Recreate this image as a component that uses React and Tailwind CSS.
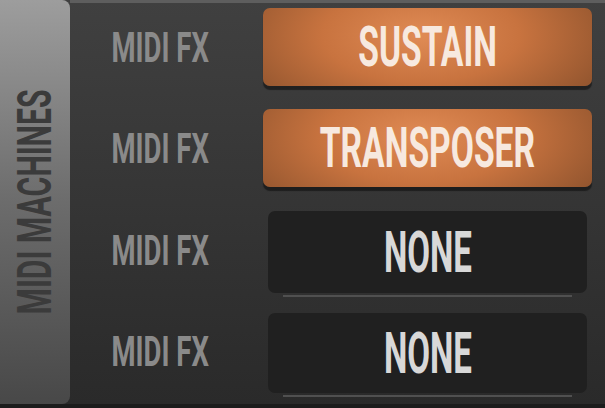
import React from "react";

const font = { fontFamily: "Roboto, 'DejaVu Sans', sans-serif" };

function Label() {
  return (
    <div className="w-[193px] pr-[13px] flex items-center justify-center h-full">
      <span
        className="inline-block text-[43px] leading-none font-bold text-[#8a8a8a] scale-x-[0.64] whitespace-nowrap"
        style={font}
      >
        MIDI FX
      </span>
    </div>
  );
}

function OrangeButton({ text }) {
  return (
    <div className="w-[329px] h-[78px] rounded-[7px] flex items-center justify-center bg-[radial-gradient(ellipse_60%_120%_at_48%_35%,#e08b55_0%,#c8733f_50%,#94562f_100%)] shadow-[0_4px_1px_rgba(0,0,0,0.45)]">
      <span
        className="inline-block text-[56px] leading-none font-bold text-[#f7e9df] scale-x-[0.6] whitespace-nowrap"
        style={font}
      >
        {text}
      </span>
    </div>
  );
}

function DarkButton({ h }) {
  return (
    <div className="flex flex-col ml-[5px] w-[319px]">
      <div
        className={`${h} rounded-[7px] flex items-center justify-center bg-[#202020]`}
      >
        <span
          className="inline-block text-[57px] leading-none font-bold text-[#d8d8d8] scale-x-[0.58] whitespace-nowrap"
          style={font}
        >
          NONE
        </span>
      </div>
      <div className="mx-[15px] h-[2px] mt-[2px] bg-[#505050]" />
    </div>
  );
}

export default function App() {
  return (
    <div className="w-[605px] h-[408px] flex flex-col overflow-hidden">
      <div className="h-[404px] flex bg-[linear-gradient(to_bottom,#404040,#2a2a2a)]">
        <div className="w-[70px] h-[404px] rounded-r-[8px] flex items-center justify-center bg-[linear-gradient(to_bottom,#9d9d9d_0%,#6c6c6c_50%,#484848_100%)]">
          <span
            className="inline-block text-[48px] leading-none font-bold text-[#3b3b3b] -rotate-90 scale-x-[0.63] whitespace-nowrap"
            style={font}
          >
            MIDI MACHINES
          </span>
        </div>
        <div className="flex-1 flex flex-col border-t-[3px] border-[#5e5e5e] pt-[5px]">
          <div className="flex h-[78px]">
            <Label />
            <OrangeButton text="SUSTAIN" />
          </div>
          <div className="flex h-[78px] mt-[23px]">
            <Label />
            <OrangeButton text="TRANSPOSER" />
          </div>
          <div className="flex mt-[24px]">
            <div className="h-[78px]">
              <Label />
            </div>
            <DarkButton h="h-[82px]" />
          </div>
          <div className="flex mt-[16px]">
            <div className="h-[77px]">
              <Label />
            </div>
            <DarkButton h="h-[80px]" />
          </div>
        </div>
      </div>
      <div className="h-[4px] bg-[#1c1c1c]" />
    </div>
  );
}
